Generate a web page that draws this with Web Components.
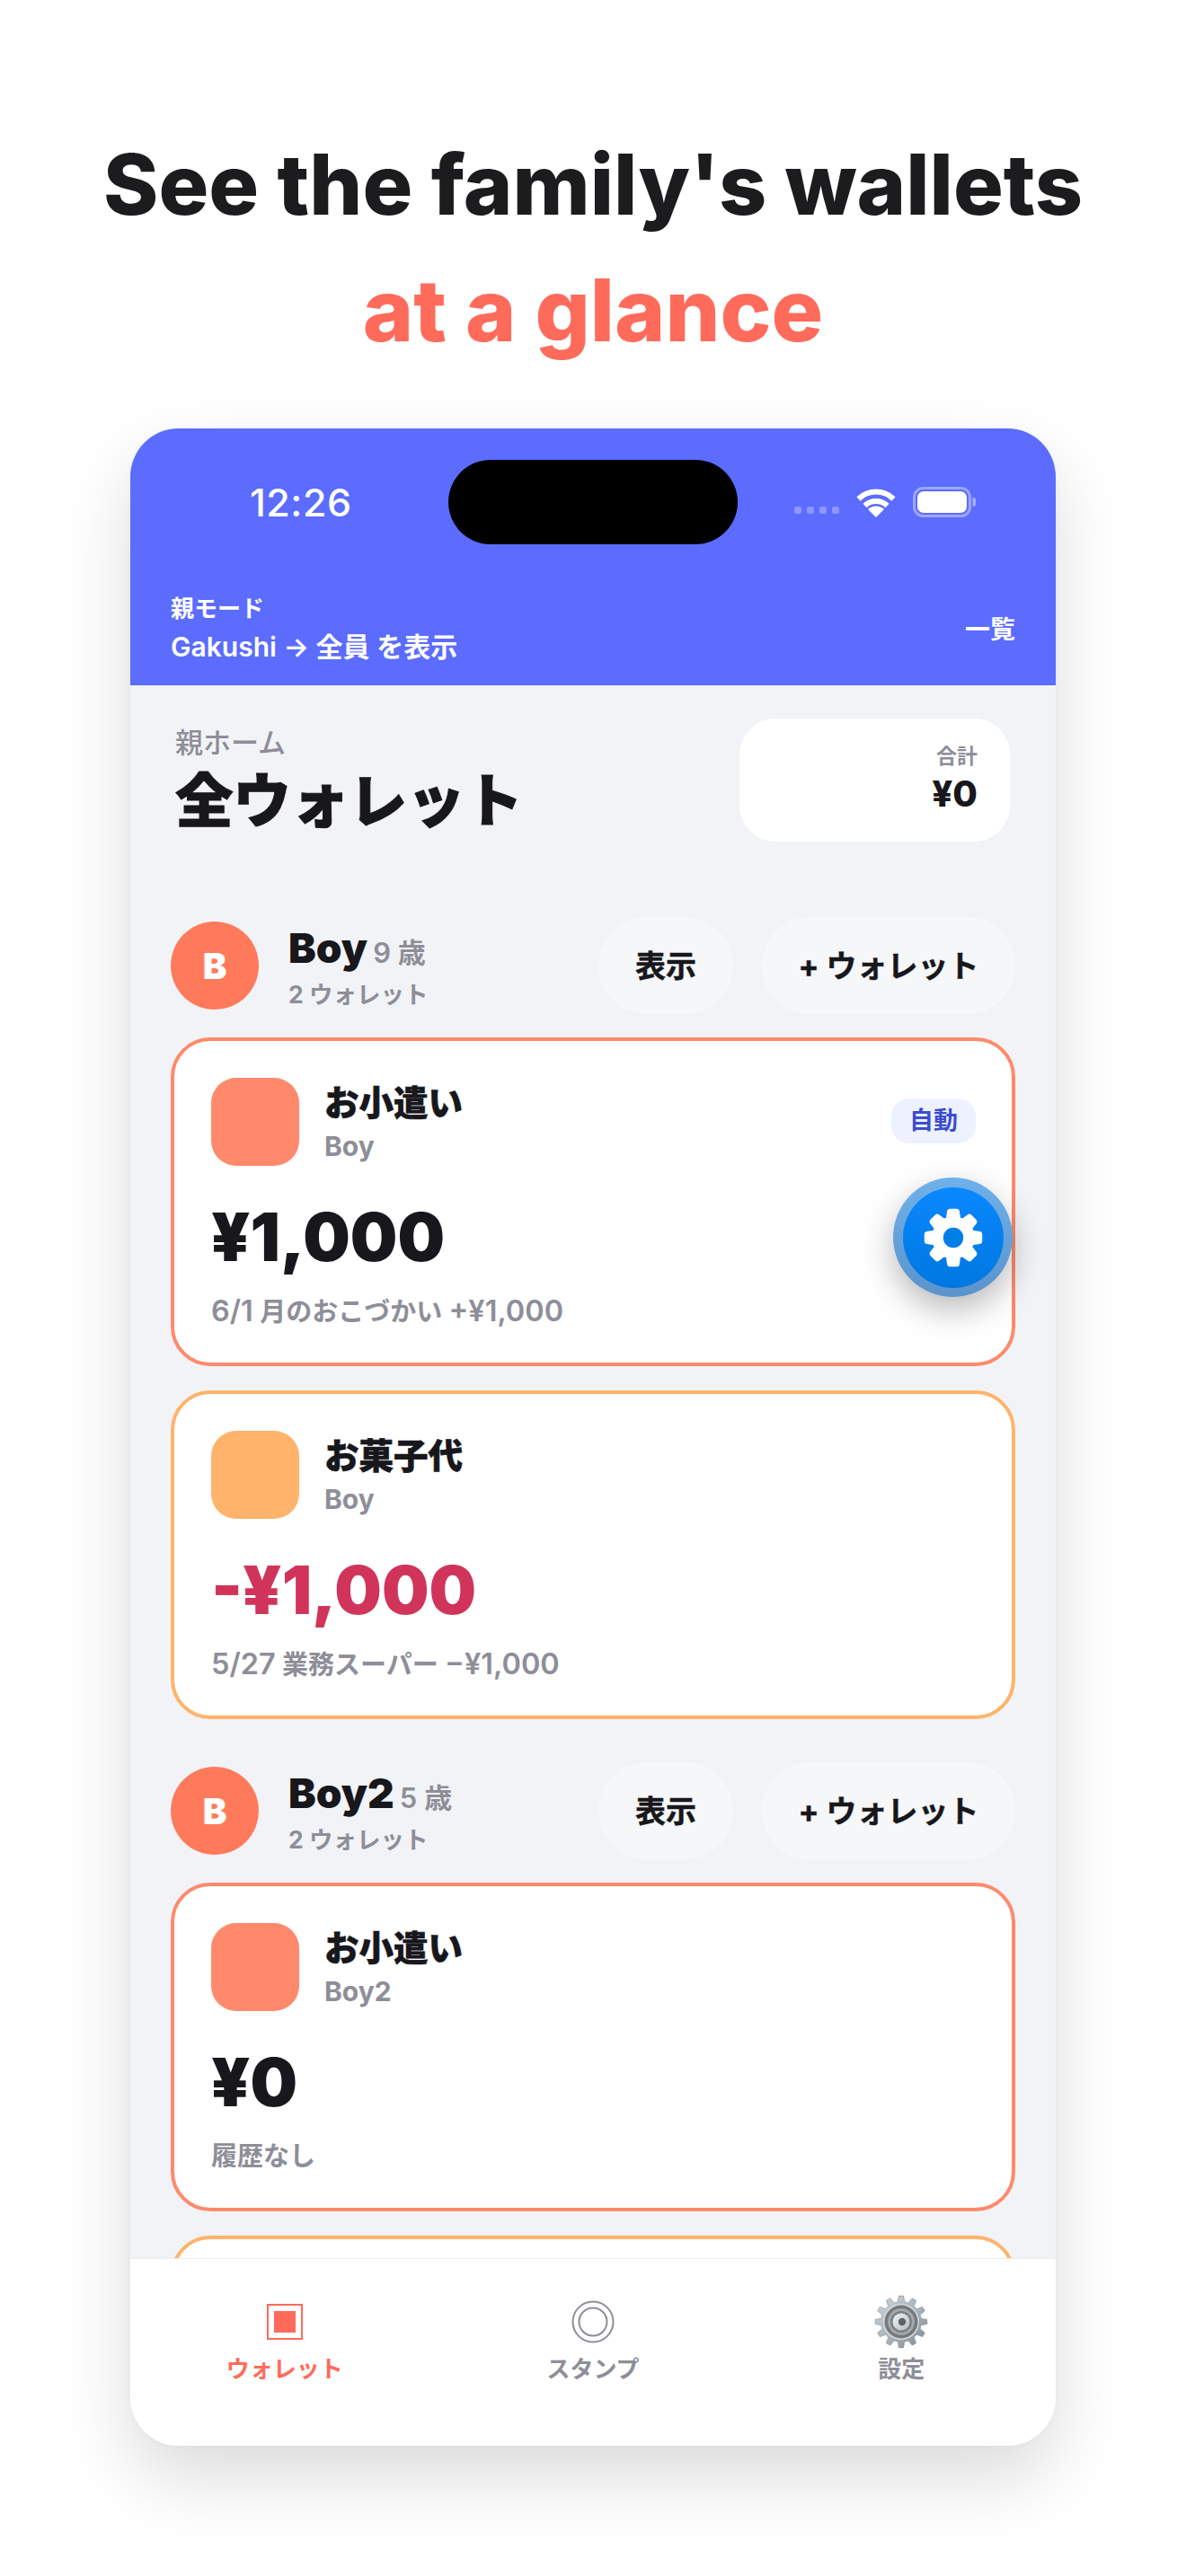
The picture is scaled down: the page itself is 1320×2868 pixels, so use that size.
<!DOCTYPE html>
<html lang="ja">
<head>
<meta charset="utf-8">
<title>Wallets</title>
<style>
    html, body {
        margin: 0;
        padding: 0;
        background: #fff;
    }
    body {
        width: 1320px;
        height: 2868px;
        overflow: hidden;
        font-family: Inter, "Noto Sans CJK JP", sans-serif;
    }
</style>
</head>
<body>
<promo-title></promo-title>
<phone-frame>
    <status-bar></status-bar>
    <parent-bar></parent-bar>
    <wallet-list>
        <home-head></home-head>
        <child-row name="Boy" age="9 歳" count="2 ウォレット"></child-row>
        <wallet-card color="#ff8a6b" title="お小遣い" owner="Boy" amount="¥1,000" note="6/1 月のおこづかい +¥1,000" badge="自動"></wallet-card>
        <wallet-card color="#ffb36b" title="お菓子代" owner="Boy" amount="-¥1,000" note="5/27 業務スーパー −¥1,000" negative></wallet-card>
        <child-row name="Boy2" age="5 歳" count="2 ウォレット" class="next"></child-row>
        <wallet-card color="#ff8a6b" title="お小遣い" owner="Boy2" amount="¥0" note="履歴なし"></wallet-card>
        <!-- only the top edge of this one shows above the tab bar -->
        <wallet-card color="#ffb36b"></wallet-card>
    </wallet-list>
    <tab-bar></tab-bar>
    <settings-fab></settings-fab>
</phone-frame>

<script>
// builds a toothed wheel outline, used by the two gear icons
function gearPath(cx, cy, teeth, outer, inner) {
    const step = Math.PI * 2 / teeth;
    let d = '';
    for (let i = 0; i < teeth; i++) {
        const a = i * step - Math.PI / 2;
        const pts = [
            [inner, a - step * 0.32],
            [outer, a - step * 0.17],
            [outer, a + step * 0.17],
            [inner, a + step * 0.32]
        ];
        pts.forEach(([r, t], j) => {
            d += (i === 0 && j === 0 ? 'M' : 'L') + (cx + r * Math.cos(t)).toFixed(2) + ' ' + (cy + r * Math.sin(t)).toFixed(2);
        });
    }
    return d + 'Z';
}

class PromoTitle extends HTMLElement {
    constructor() {
        super();
        this.attachShadow({ mode: 'open' });
        this.shadowRoot.innerHTML = `
            <style>
                :host {
                    display: block;
                    padding-top: 135px;
                    text-align: center;
                    font: 800 93px/140px Inter, "Noto Sans CJK JP", sans-serif;
                    color: #1c1c1e;
                }
                .accent { color: #ff6b5b; font-size: 96px; }
            </style>
            <div>See the family's wallets</div>
            <div class="accent">at a glance</div>
        `;
    }
}

class PhoneFrame extends HTMLElement {
    constructor() {
        super();
        this.attachShadow({ mode: 'open' });
        this.shadowRoot.innerHTML = `
            <style>
                :host {
                    display: block;
                    position: relative;
                    width: 1030px;
                    height: 2246px;
                    margin: 62px auto 0;
                    border-radius: 54px;
                    box-shadow: 0 36px 80px rgba(0,0,0,0.14), 0 0 6px rgba(0,0,0,0.04);
                }
                .screen {
                    display: flex;
                    flex-direction: column;
                    height: 100%;
                    border-radius: 54px;
                    overflow: hidden;
                    background: #f2f3f7;
                }
            </style>
            <div class="screen"><slot></slot></div>
        `;
    }
}

class StatusBar extends HTMLElement {
    constructor() {
        super();
        this.attachShadow({ mode: 'open' });
        this.shadowRoot.innerHTML = `
            <style>
                :host {
                    display: grid;
                    grid-template-columns: 1fr 322px 1fr;
                    align-items: center;
                    flex: none;
                    height: 94px;
                    padding-top: 35px;
                    background: #5b6cff;
                    color: #fff;
                }
                .time {
                    padding-left: 133px;
                    font: 500 43px/50px Inter, sans-serif;
                    letter-spacing: 0.5px;
                }
                .island {
                    height: 94px;
                    border-radius: 47px;
                    background: #000;
                }
                .icons {
                    display: flex;
                    justify-content: flex-end;
                    align-items: center;
                    gap: 19px;
                    padding-right: 89px;
                }
                .dots {
                    display: flex;
                    gap: 6px;
                    margin-top: 17px;
                }
                .dots i {
                    width: 8px;
                    height: 8px;
                    border-radius: 2.5px;
                    background: rgba(255,255,255,0.3);
                }
                svg { display: block; }
            </style>
            <div class="time">12:26</div>
            <div class="island"></div>
            <div class="icons">
                <div class="dots"><i></i><i></i><i></i><i></i></div>
                <svg width="44" height="33" viewBox="0 0 44 33" fill="none" stroke="#fff" stroke-width="6">
                    <path d="M2.5 12.5a28 28 0 0 1 39 0"/>
                    <path d="M9.5 20a18 18 0 0 1 25 0"/>
                    <path d="M22 33l-9-9a13 13 0 0 1 18 0z" fill="#fff" stroke="none"/>
                </svg>
                <svg width="70" height="34" viewBox="0 0 70 34">
                    <rect x="1.5" y="1.5" width="62" height="31" rx="10" fill="none" stroke="rgba(255,255,255,0.4)" stroke-width="3"/>
                    <rect x="5" y="5" width="55" height="24" rx="7" fill="#fff"/>
                    <path d="M66.5 12a5 5 0 0 1 0 10z" fill="rgba(255,255,255,0.45)"/>
                </svg>
            </div>
        `;
    }
}

class ParentBar extends HTMLElement {
    constructor() {
        super();
        this.attachShadow({ mode: 'open' });
        this.shadowRoot.innerHTML = `
            <style>
                :host {
                    display: flex;
                    flex: none;
                    justify-content: space-between;
                    align-items: center;
                    padding: 54px 45px 25px 45px;
                    background: #5b6cff;
                    color: #fff;
                    font-family: Inter, "Noto Sans CJK JP", sans-serif;
                }
                .mode { font-size: 26px; font-weight: 700; line-height: 36px; }
                .who { font-size: 30px; font-weight: 600; line-height: 36px; margin-top: 6px; }
                .all { font-size: 28px; font-weight: 700; }
            </style>
            <div>
                <div class="mode">親モード</div>
                <div class="who">Gakushi → 全員 を表示</div>
            </div>
            <div class="all">一覧</div>
        `;
    }
}

class WalletList extends HTMLElement {
    constructor() {
        super();
        this.attachShadow({ mode: 'open' });
        this.shadowRoot.innerHTML = `
            <style>
                :host {
                    display: block;
                    flex: 1;
                    min-height: 0;
                    overflow: hidden;
                    padding: 37px 45px 0;
                }
            </style>
            <slot></slot>
        `;
    }
}

class HomeHead extends HTMLElement {
    constructor() {
        super();
        this.attachShadow({ mode: 'open' });
        this.shadowRoot.innerHTML = `
            <style>
                :host {
                    display: flex;
                    justify-content: space-between;
                    margin: 0 6px 84px 5px;
                    font-family: Inter, "Noto Sans CJK JP", sans-serif;
                    color: #17171c;
                }
                .label {
                    margin-top: 5px;
                    font-size: 31px;
                    font-weight: 500;
                    line-height: 44px;
                    color: #8e8e98;
                }
                h1 {
                    margin: 0;
                    font-size: 64.5px;
                    font-weight: 900;
                    line-height: 86px;
                    -webkit-text-stroke: 1px #17171c;
                }
                .total {
                    box-sizing: border-box;
                    width: 301px;
                    height: 137px;
                    padding: 24px 36px 0 0;
                    border-radius: 40px;
                    background: #fff;
                    text-align: right;
                }
                .total small {
                    display: block;
                    font-size: 23px;
                    font-weight: 700;
                    line-height: 36px;
                    color: #8e8e98;
                }
                .total b {
                    display: block;
                    font-size: 40px;
                    font-weight: 800;
                    line-height: 48px;
                }
            </style>
            <div>
                <div class="label">親ホーム</div>
                <h1>全ウォレット</h1>
            </div>
            <div class="total"><small>合計</small><b>¥0</b></div>
        `;
    }
}

class ChildRow extends HTMLElement {
    constructor() {
        super();
        this.attachShadow({ mode: 'open' });
        this.shadowRoot.innerHTML = `
            <style>
                :host {
                    display: flex;
                    align-items: center;
                    height: 108px;
                    margin-bottom: 26px;
                    font-family: Inter, "Noto Sans CJK JP", sans-serif;
                    color: #17171c;
                }
                :host(.next) { margin-top: 48px; }
                .avatar {
                    display: flex;
                    justify-content: center;
                    align-items: center;
                    width: 98px;
                    height: 98px;
                    border-radius: 50%;
                    background: #ff7a5a;
                    color: #fff;
                    font-size: 40px;
                    font-weight: 900;
                }
                .info { flex: 1; margin-left: 33px; }
                .name { font-size: 46px; font-weight: 900; line-height: 56px; margin-top: 2px; }
                .age { font-size: 31px; font-weight: 600; color: #8e8e98; margin-left: -3px; }
                .count { font-size: 26.5px; font-weight: 700; line-height: 36px; color: #8e8e98; }
                .btn {
                    display: flex;
                    justify-content: center;
                    align-items: center;
                    box-sizing: border-box;
                    height: 108px;
                    padding-bottom: 3px;
                    border-radius: 54px;
                    background: #f6f7f9;
                    font-size: 34px;
                    font-weight: 700;
                    -webkit-text-stroke: 0.5px #17171c;
                }
                .show { width: 150px; margin-right: 32px; }
                .add { width: 282px; }
            </style>
            <div class="avatar">B</div>
            <div class="info">
                <div class="name">${this.getAttribute('name')} <span class="age">${this.getAttribute('age')}</span></div>
                <div class="count">${this.getAttribute('count')}</div>
            </div>
            <div class="btn show">表示</div>
            <div class="btn add">+ ウォレット</div>
        `;
    }
}

class WalletCard extends HTMLElement {
    constructor() {
        super();
        this.attachShadow({ mode: 'open' });
        const color = this.getAttribute('color');
        const badge = this.getAttribute('badge');
        const title = this.getAttribute('title') || '';
        const owner = this.getAttribute('owner') || '';
        const amount = this.getAttribute('amount') || '';
        // latin runs in the note are set a little larger than the kana around them
        const note = (this.getAttribute('note') || '').replace(/[\x21-\x7e¥−]+/g, m => `<span>${m}</span>`);
        this.shadowRoot.innerHTML = `
            <style>
                :host {
                    display: block;
                    box-sizing: border-box;
                    height: 366px;
                    margin-bottom: 27px;
                    padding: 41px 41px 0;
                    border: 4px solid ${color};
                    border-radius: 44px;
                    background: #fff;
                    font-family: Inter, "Noto Sans CJK JP", sans-serif;
                    color: #17171c;
                }
                .top { display: flex; align-items: center; }
                .icon {
                    flex: none;
                    width: 98px;
                    height: 98px;
                    border-radius: 28px;
                    background: ${color};
                }
                .names { flex: 1; margin-left: 28px; }
                .title {
                    min-height: 48px;
                    font-size: 38.5px;
                    font-weight: 900;
                    line-height: 48px;
                    -webkit-text-stroke: 0.6px #17171c;
                }
                .owner { min-height: 36px; font-size: 30px; font-weight: 700; line-height: 36px; margin-top: 6px; color: #8e8e98; }
                .badge {
                    box-sizing: border-box;
                    width: 94px;
                    height: 50px;
                    margin: -2px -1px 0 0;
                    border-radius: 20px;
                    background: #eef1ff;
                    color: #3b4ccf;
                    font-size: 27px;
                    font-weight: 700;
                    line-height: 50px;
                    text-align: center;
                }
                .amount {
                    margin-top: 34px;
                    min-height: 90px;
                    font-size: 74px;
                    font-weight: 900;
                    line-height: 90px;
                }
                .amount.negative { color: #d1345b; }
                .note {
                    margin-top: 18px;
                    font-size: 29px;
                    font-weight: 600;
                    line-height: 40px;
                    color: #8e8e98;
                }
                .note span { font-size: 32.5px; }
            </style>
            <div class="top">
                <div class="icon"></div>
                <div class="names">
                    <div class="title">${title}</div>
                    <div class="owner">${owner}</div>
                </div>
                ${badge ? `<div class="badge">${badge}</div>` : ''}
            </div>
            <div class="amount ${this.hasAttribute('negative') ? 'negative' : ''}">${amount}</div>
            <div class="note">${note}</div>
        `;
    }
}

class TabItem extends HTMLElement {
    constructor() {
        super();
        this.attachShadow({ mode: 'open' });
        this.shadowRoot.innerHTML = `
            <style>
                :host {
                    display: flex;
                    flex: 1;
                    flex-direction: column;
                    align-items: center;
                    font-family: Inter, "Noto Sans CJK JP", sans-serif;
                    font-size: 26px;
                    font-weight: 600;
                    line-height: 36px;
                    color: #8e8e98;
                }
                :host([active]) { color: #ff6b5b; }
                .icon {
                    display: flex;
                    justify-content: center;
                    align-items: center;
                    height: 60px;
                    margin-bottom: 5px;
                }
            </style>
            <div class="icon"><slot name="icon"></slot></div>
            <div>${this.getAttribute('label')}</div>
        `;
    }
}

class TabBar extends HTMLElement {
    constructor() {
        super();
        this.attachShadow({ mode: 'open' });
        this.shadowRoot.innerHTML = `
            <style>
                :host {
                    display: flex;
                    flex: none;
                    box-sizing: border-box;
                    height: 209px;
                    padding-top: 40px;
                    border-top: 1px solid #ececef;
                    background: #fff;
                }
                svg { display: block; }
            </style>
            <tab-item label="ウォレット" active>
                <svg slot="icon" width="40" height="40" viewBox="0 0 40 40">
                    <rect x="1" y="1" width="38" height="38" fill="none" stroke="#ff6b5b" stroke-width="2"/>
                    <rect x="8" y="8" width="24" height="24" fill="#ff6b5b"/>
                </svg>
            </tab-item>
            <tab-item label="スタンプ">
                <svg slot="icon" width="48" height="48" viewBox="0 0 48 48" fill="none" stroke="#8e8e98" stroke-width="2">
                    <circle cx="24" cy="24" r="22.5"/>
                    <circle cx="24" cy="24" r="15.5"/>
                </svg>
            </tab-item>
            <tab-item label="設定">
                <svg slot="icon" width="60" height="60" viewBox="0 0 60 60">
                    <defs>
                        <linearGradient id="steel" x1="0" y1="0" x2="1" y2="1">
                            <stop offset="0" stop-color="#cdd6dd"/>
                            <stop offset="0.55" stop-color="#a8b2ba"/>
                            <stop offset="1" stop-color="#7f868d"/>
                        </linearGradient>
                        <linearGradient id="hub" x1="0" y1="0" x2="1" y2="1">
                            <stop offset="0" stop-color="#f2f5f7"/>
                            <stop offset="1" stop-color="#b3bcc2"/>
                        </linearGradient>
                    </defs>
                    <path d="${gearPath(30, 30, 12, 29, 22.5)}" fill="url(#steel)" stroke="#8a9096" stroke-width="0.6" stroke-linejoin="round"/>
                    <circle cx="30" cy="30" r="20" fill="#d5dade"/>
                    <circle cx="30" cy="30" r="18.5" fill="#75797d"/>
                    <circle cx="30" cy="30" r="15" fill="#a4a8ab"/>
                    <circle cx="30" cy="30" r="12" fill="#7c8185"/>
                    <circle cx="30" cy="30" r="9.5" fill="url(#hub)"/>
                    <circle cx="31" cy="30" r="4.2" fill="#5d6368"/>
                </svg>
            </tab-item>
        `;
    }
}

class SettingsFab extends HTMLElement {
    constructor() {
        super();
        this.attachShadow({ mode: 'open' });
        this.shadowRoot.innerHTML = `
            <style>
                :host {
                    position: absolute;
                    top: 834px;
                    right: 48px;
                    display: flex;
                    justify-content: center;
                    align-items: center;
                    width: 133px;
                    height: 133px;
                    border-radius: 50%;
                    background: linear-gradient(#6fb1ea, #5b93cb);
                    box-shadow: 0 14px 36px rgba(0,0,0,0.28);
                }
                .inner {
                    display: flex;
                    justify-content: center;
                    align-items: center;
                    width: 112px;
                    height: 112px;
                    border-radius: 50%;
                    background: linear-gradient(#0a88ff, #0077e0);
                }
            </style>
            <div class="inner">
                <svg width="68" height="68" viewBox="0 0 68 68">
                    <path d="${gearPath(34, 34, 8, 29.5, 21)}" fill="#fff" stroke="#fff" stroke-width="6" stroke-linejoin="round"/>
                    <circle cx="34" cy="34" r="11.2" fill="#007ee8"/>
                </svg>
            </div>
        `;
    }
}

customElements.define('promo-title', PromoTitle);
customElements.define('phone-frame', PhoneFrame);
customElements.define('status-bar', StatusBar);
customElements.define('parent-bar', ParentBar);
customElements.define('wallet-list', WalletList);
customElements.define('home-head', HomeHead);
customElements.define('child-row', ChildRow);
customElements.define('wallet-card', WalletCard);
customElements.define('tab-item', TabItem);
customElements.define('tab-bar', TabBar);
customElements.define('settings-fab', SettingsFab);
</script>
</body>
</html>
